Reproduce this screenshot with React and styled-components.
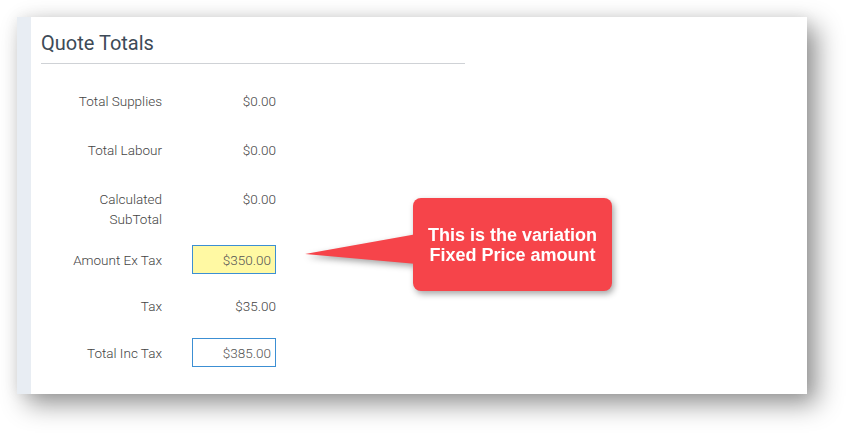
import React from "react";
import styled, { createGlobalStyle } from "styled-components";

const GlobalStyle = createGlobalStyle`
  html, body {
    margin: 0;
    padding: 0;
    background: #fff;
  }
  body {
    font-family: Roboto, "Liberation Sans", Arial, sans-serif;
  }
`;

const Page = styled.div`
  width: 855px;
  height: 442px;
  padding: 17px 0 0 17px;
  box-sizing: border-box;
  overflow: hidden;
`;

const Panel = styled.section`
  position: relative;
  display: flex;
  width: 790px;
  height: 377px;
  background: #fff;
  box-shadow: 10px 10px 24px rgba(0, 0, 0, 0.42), 0 0 14px rgba(0, 0, 0, 0.07);
`;

const Strip = styled.div`
  width: 14px;
  flex: none;
  background: #e8edf3;
`;

const Content = styled.div`
  padding-left: 10px;
`;

const Header = styled.h2`
  width: 424px;
  margin: 0;
  padding: 13px 0 7px;
  border-bottom: 1px solid #cfd2d6;
  font-family: Roboto, "Liberation Sans", sans-serif;
  font-weight: 400;
  font-size: 20px;
  line-height: 26px;
  color: #3d4a57;
`;

const Row = styled.div`
  display: grid;
  grid-template-columns: 121px 84px;
  column-gap: 30px;
  align-items: ${(p) => (p.$top ? "start" : "center")};
  margin-top: ${(p) => p.$gap}px;
  font-size: 13.5px;
  font-weight: 300;
  line-height: 20px;
  color: #444;
`;

const Label = styled.div`
  text-align: right;
`;

const Value = styled.div`
  text-align: right;
`;

const Field = styled.div`
  height: 27px;
  border: 1px solid #3c8fd3;
  background: ${(p) => (p.$highlight ? "#fff9a3" : "#fff")};
  padding-right: 4px;
  text-align: right;
  line-height: 28px;
  color: #555;
`;

const Callout = styled.div`
  position: absolute;
  left: 396px;
  top: 181px;
  width: 199px;
  height: 93px;
  filter: drop-shadow(2px 3px 3px rgba(0, 0, 0, 0.35));
`;

const Pointer = styled.svg`
  position: absolute;
  left: -108px;
  top: 0;
  overflow: visible;
`;

const Bubble = styled.div`
  position: relative;
  display: flex;
  align-items: center;
  justify-content: center;
  width: 100%;
  height: 100%;
  border-radius: 8px;
  background: #f6444a;
  color: #fff;
  font-family: Arial, "Liberation Sans", sans-serif;
  font-weight: 700;
  font-size: 18px;
  line-height: 20px;
  text-align: center;
`;

const rows = [
  { label: "Total Supplies", value: "$0.00", gap: 27 },
  { label: "Total Labour", value: "$0.00", gap: 29 },
  { label: ["Calculated", "SubTotal"], value: "$0.00", gap: 29, top: true },
  { label: "Amount Ex Tax", value: "$350.00", gap: 16, field: true, highlight: true },
  { label: "Tax", value: "$35.00", gap: 22 },
  { label: "Total Inc Tax", value: "$385.00", gap: 22, field: true },
];

export default function App() {
  return (
    <>
      <GlobalStyle />
      <Page>
        <Panel>
          <Strip />
          <Content>
            <Header>Quote Totals</Header>
            {rows.map((r, i) => (
              <Row key={i} $gap={r.gap} $top={r.top}>
                <Label>
                  {Array.isArray(r.label)
                    ? r.label.map((l) => <div key={l}>{l}</div>)
                    : r.label}
                </Label>
                {r.field ? (
                  <Field $highlight={r.highlight}>{r.value}</Field>
                ) : (
                  <Value>{r.value}</Value>
                )}
              </Row>
            ))}
          </Content>
          <Callout>
            <Pointer width="112" height="93" viewBox="0 0 112 93">
              <polygon points="0,56 112,36 112,66" fill="#f6444a" />
            </Pointer>
            <Bubble>
              This is the variation
              <br />
              Fixed Price amount
            </Bubble>
          </Callout>
        </Panel>
      </Page>
    </>
  );
}
